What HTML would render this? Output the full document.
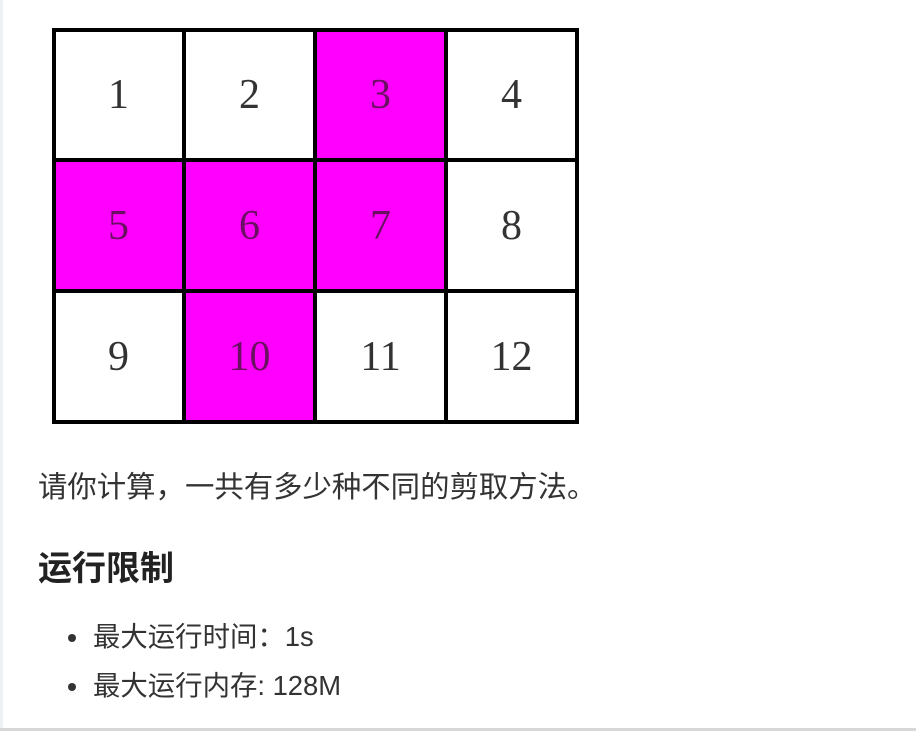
<!DOCTYPE html>
<html><head><meta charset="utf-8"><style>
body{margin:0;width:916px;height:731px;background:#fff;position:relative;overflow:hidden;font-family:"Liberation Sans","Noto Sans CJK SC",sans-serif;color:#333}
.c{position:absolute;box-sizing:border-box;display:flex;align-items:center;justify-content:center;font-family:"Liberation Serif","Noto Serif CJK SC",serif;font-size:42px;color:#333}
.m{background:#ff00ff;color:#6a1060}
.l{position:absolute;background:#000}
.t{position:absolute;white-space:nowrap;line-height:1}
</style></head><body>
<div style="position:absolute;left:0;top:0;width:3px;height:731px;background:#eef1f4"></div>
<div style="position:absolute;left:0;top:728px;width:916px;height:3px;background:#d8d8d8"></div>
<div class="c" style="left:53px;top:29px;width:131px;height:131px">1</div>
<div class="c" style="left:184px;top:29px;width:131px;height:131px">2</div>
<div class="c m" style="left:315px;top:29px;width:131px;height:131px">3</div>
<div class="c" style="left:446px;top:29px;width:131px;height:131px">4</div>
<div class="c m" style="left:53px;top:160px;width:131px;height:131px">5</div>
<div class="c m" style="left:184px;top:160px;width:131px;height:131px">6</div>
<div class="c m" style="left:315px;top:160px;width:131px;height:131px">7</div>
<div class="c" style="left:446px;top:160px;width:131px;height:131px">8</div>
<div class="c" style="left:53px;top:291px;width:131px;height:131px">9</div>
<div class="c m" style="left:184px;top:291px;width:131px;height:131px">10</div>
<div class="c" style="left:315px;top:291px;width:131px;height:131px">11</div>
<div class="c" style="left:446px;top:291px;width:131px;height:131px">12</div>
<div class="l" style="left:52px;top:28px;width:527px;height:4px"></div>
<div class="l" style="left:52px;top:158px;width:527px;height:4px"></div>
<div class="l" style="left:52px;top:289px;width:527px;height:4px"></div>
<div class="l" style="left:52px;top:420px;width:527px;height:4px"></div>
<div class="l" style="left:52px;top:28px;width:4px;height:396px"></div>
<div class="l" style="left:182px;top:28px;width:4px;height:396px"></div>
<div class="l" style="left:313px;top:28px;width:4px;height:396px"></div>
<div class="l" style="left:444px;top:28px;width:4px;height:396px"></div>
<div class="l" style="left:575px;top:28px;width:4px;height:396px"></div>
<div class="t" style="left:38px;top:473px;font-size:29.4px">请你计算，一共有多少种不同的剪取方法。</div>
<div class="t" style="left:38px;top:552px;font-size:34px;font-weight:bold;color:#222">运行限制</div>
<div style="position:absolute;left:68px;top:634px;width:8px;height:8px;border-radius:50%;background:#333"></div>
<div style="position:absolute;left:68px;top:683px;width:8px;height:8px;border-radius:50%;background:#333"></div>
<div class="t" style="left:93px;top:623px;font-size:27.4px">最大运行时间：1s</div>
<div class="t" style="left:93px;top:672px;font-size:27.4px">最大运行内存: 128M</div>
</body></html>
